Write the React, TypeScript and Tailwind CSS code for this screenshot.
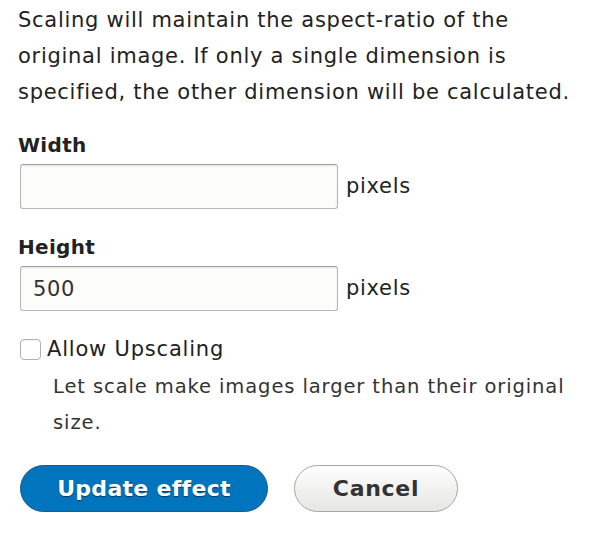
import React from "react";

export default function App() {
  return (
    <div
      className="w-[600px] h-[534px] bg-white text-[#222] px-[18px] pt-[2px]"
      style={{ fontFamily: '"DejaVu Sans", "Liberation Sans", sans-serif' }}
    >
      <p className="text-[21px] leading-[36px] tracking-[0.72px]">
        Scaling will maintain the aspect-ratio of the
        <br />
        original image. If only a single dimension is
        <br />
        specified, the other dimension will be calculated.
      </p>

      <div className="mt-[23px]">
        <label className="block text-[20px] font-bold leading-[24px] tracking-[0.3px]">
          Width
        </label>
        <div className="flex items-center mt-[7px]">
          <input
            type="text"
            className="w-[318px] h-[45px] ml-[2px] rounded-[3px] border border-[#b8b8b8] border-t-[#a0a0a0] bg-[#fcfcfa] px-[12px] text-[21px] tracking-[0.7px] text-[#333] shadow-[inset_0_1px_2px_rgba(0,0,0,0.1)] outline-none"
          />
          <span className="ml-[8px] text-[21px] tracking-[0.7px]">pixels</span>
        </div>
      </div>

      <div className="mt-[26px]">
        <label className="block text-[20px] font-bold leading-[24px] tracking-[0.3px]">
          Height
        </label>
        <div className="flex items-center mt-[7px]">
          <input
            type="text"
            defaultValue="500"
            className="w-[318px] h-[45px] ml-[2px] rounded-[3px] border border-[#b8b8b8] border-t-[#a0a0a0] bg-[#fcfcfa] px-[12px] text-[21px] tracking-[0.7px] text-[#333] shadow-[inset_0_1px_2px_rgba(0,0,0,0.1)] outline-none"
          />
          <span className="ml-[8px] text-[21px] tracking-[0.7px]">pixels</span>
        </div>
      </div>

      <div className="mt-[28px]">
        <label className="flex items-center ml-[2px]">
          <span className="w-[21px] h-[21px] rounded-[4px] border border-[#b0b0b0] bg-white shadow-[inset_0_1px_1px_rgba(0,0,0,0.06)]" />
          <span className="ml-[6px] text-[21px] leading-[21px] tracking-[0.8px]">
            Allow Upscaling
          </span>
        </label>
        <p className="ml-[35px] mt-[9px] text-[19.5px] leading-[36px] tracking-[0.9px] text-[#333]">
          Let scale make images larger than their original
          <br />
          size.
        </p>
      </div>

      <div className="flex items-center mt-[24px] ml-[2px]">
        <button className="w-[248px] h-[47px] rounded-full border border-[#1d5a8e] bg-[#0074bd] text-white text-[22px] font-bold tracking-[0.3px] [text-shadow:0_1px_1px_rgba(0,0,0,0.5)]">
          Update effect
        </button>
        <button className="ml-[26px] w-[164px] h-[47px] rounded-full border border-[#a6a6a6] bg-gradient-to-b from-[#fefefe] to-[#e6e6e2] text-[#333] text-[22px] font-bold tracking-[0.7px]">
          Cancel
        </button>
      </div>
    </div>
  );
}
